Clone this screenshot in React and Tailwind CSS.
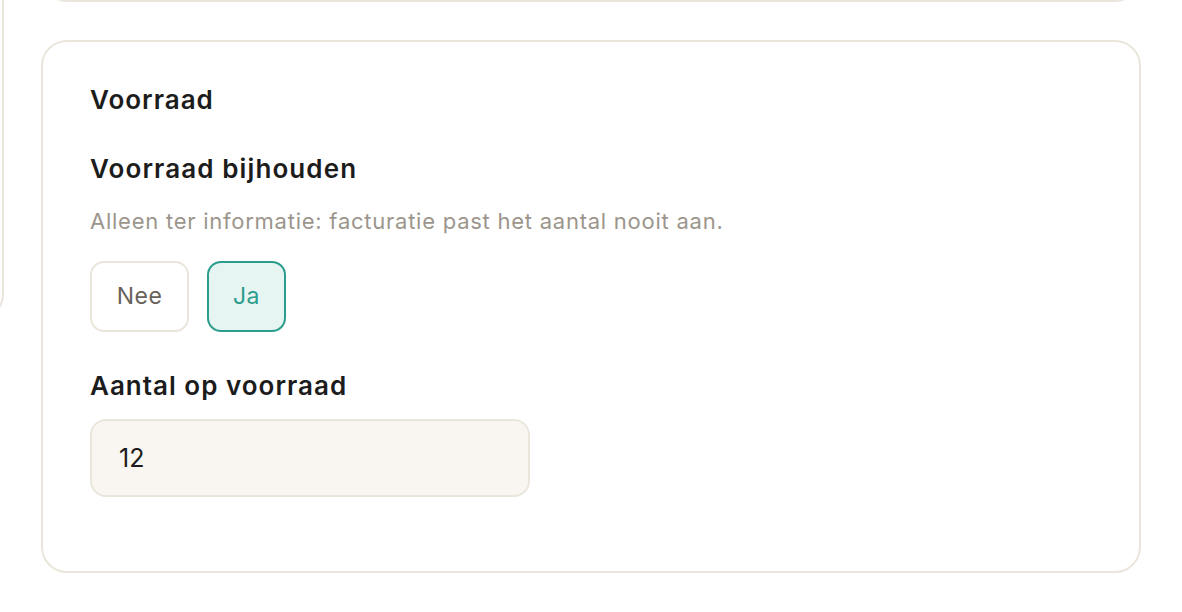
import { useState } from 'react'

// ── Voorraad card ─────────────────────────────────────────────
function StockCard() {
  const [track, setTrack] = useState(true)
  const [amount, setAmount] = useState('12')

  return (
    <section className="bg-white border-2 border-[#ebe6dc] rounded-[26px] pl-[47px] pr-[48px] pt-[38px] pb-[74px]">
      <h2 className="text-[26px] leading-[40px] font-semibold tracking-[1px] text-[#1c1c1c]">Voorraad</h2>

      <h3 className="mt-[31px] text-[26px] leading-[36px] font-semibold tracking-[1.1px] text-[#1c1c1c]">Voorraad bijhouden</h3>
      <p className="mt-[20px] text-[22px] leading-[28px] tracking-[0.75px] text-[#9c958c]">
        Alleen ter informatie: facturatie past het aantal nooit aan.
      </p>

      <div className="mt-[26px] flex gap-[18px]">
        <button onClick={() => setTrack(false)}
          className={`h-[71px] w-[99px] rounded-[14px] border-2 text-[23px] tracking-[0.5px] ${!track ? 'bg-[#e6f4f2] border-[#2b9d8d] text-[#2b9d8d]' : 'bg-white border-[#ebe6dc] text-[#67615a]'}`}>
          Nee
        </button>
        <button onClick={() => setTrack(true)}
          className={`h-[71px] w-[79px] rounded-[14px] border-2 text-[23px] tracking-[0.5px] ${track ? 'bg-[#e6f4f2] border-[#2b9d8d] text-[#2b9d8d]' : 'bg-white border-[#ebe6dc] text-[#67615a]'}`}>
          Ja
        </button>
      </div>

      <label className="block mt-[36px] text-[26px] leading-[36px] font-semibold tracking-[1px] text-[#1c1c1c]">Aantal op voorraad</label>
      <input value={amount} onChange={e => setAmount(e.target.value)}
        className="mt-[15px] block w-[440px] h-[78px] rounded-[16px] border-2 border-[#ebe6dc] bg-[#f9f6f1] px-[27px] text-[25px] text-[#1c1c1c] outline-none" />
    </section>
  )
}

export default function App() {
  return (
    <div className="w-[1182px] h-[612px] overflow-hidden bg-white" style={{ fontFamily: 'Inter, "Noto Sans", sans-serif' }}>
      <div className="flex gap-[37px] -mt-[300px]">
        {/* left column, mostly scrolled out of view */}
        <div className="-ml-[300px] w-[304px] h-[620px] shrink-0 border-2 border-[#ebe6dc] rounded-[26px]" />

        <div className="flex-1 pr-[41px] flex flex-col gap-[38px]">
          <div className="h-[302px] border-2 border-[#ebe6dc] rounded-[26px]" />
          <StockCard />
        </div>
      </div>
    </div>
  )
}
